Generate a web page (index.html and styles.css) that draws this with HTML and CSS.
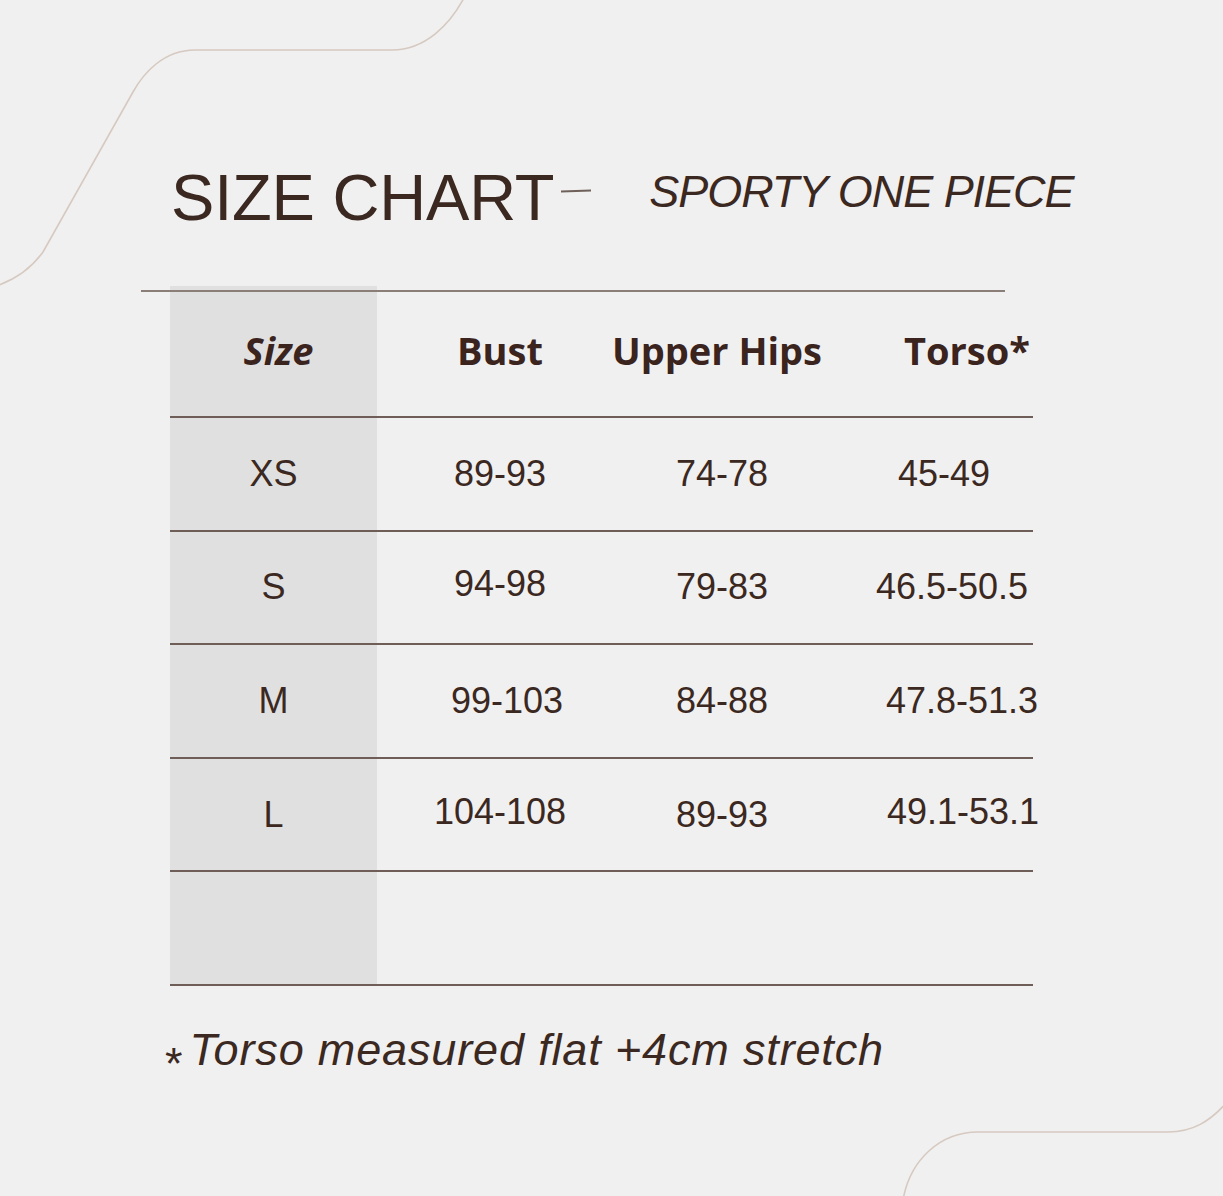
FILE: index.html
```html
<!DOCTYPE html>
<html lang="en">
<head>
<meta charset="utf-8">
<title>Size Chart – Sporty One Piece</title>
<link rel="stylesheet" href="styles.css">
</head>
<body>
<svg class="deco" width="1223" height="1196" viewBox="0 0 1223 1196" aria-hidden="true">
  <path d="M -4 286 C 14 280 30 270 43 252 L 133 92 C 143 74 163 50 195 50 L 392 50 C 425 50 450 25 465 -4" />
  <path d="M 903 1200 C 910 1160 940 1132 978 1132 L 1168 1132 C 1192 1132 1210 1122 1228 1101" />
</svg>
<main class="page">
  <header class="head">
    <h1 class="title">SIZE CHART</h1>
    <span class="dash"></span>
    <h2 class="subtitle">SPORTY ONE PIECE</h2>
  </header>

  <div class="rule-top"></div>

  <section class="chart">
    <div class="row row-head">
      <div class="cell c1 th th-size">Size</div>
      <div class="cell c2 th">Bust</div>
      <div class="cell c3 th th-hips">Upper Hips</div>
      <div class="cell c4 th th-torso">Torso*</div>
    </div>
    <div class="row">
      <div class="cell c1">XS</div>
      <div class="cell c2">89-93</div>
      <div class="cell c3">74-78</div>
      <div class="cell c4 t-xs">45-49</div>
    </div>
    <div class="row">
      <div class="cell c1">S</div>
      <div class="cell c2 up">94-98</div>
      <div class="cell c3">79-83</div>
      <div class="cell c4 t-s">46.5-50.5</div>
    </div>
    <div class="row">
      <div class="cell c1">M</div>
      <div class="cell c2 b-m">99-103</div>
      <div class="cell c3">84-88</div>
      <div class="cell c4 t-m">47.8-51.3</div>
    </div>
    <div class="row">
      <div class="cell c1">L</div>
      <div class="cell c2 up">104-108</div>
      <div class="cell c3">89-93</div>
      <div class="cell c4 t-l up">49.1-53.1</div>
    </div>
    <div class="row">
      <div class="cell c1"></div>
      <div class="cell c2"></div>
      <div class="cell c3"></div>
      <div class="cell c4"></div>
    </div>
  </section>

  <p class="note"><span class="star">*</span>Torso measured flat +4cm stretch</p>
</main>
</body>
</html>
```

FILE: styles.css
```css
html, body {
  margin: 0;
  padding: 0;
}

body {
  background: #f0f0f0;
  color: #3b2821;
  font-family: "Liberation Sans", Arial, sans-serif;
  width: 1223px;
  height: 1196px;
  overflow: hidden;
  position: relative;
}

.deco {
  position: absolute;
  left: 0;
  top: 0;
  z-index: 0;
}

.deco path {
  fill: none;
  stroke: #d6c9c0;
  stroke-width: 1.6;
}

.page {
  position: relative;
  z-index: 1;
  padding-top: 165px;
}

/* ---------- heading ---------- */
.head {
  display: flex;
  align-items: flex-start;
  margin-left: 171px;
  height: 65px;
}

.title {
  margin: 0;
  font-weight: 400;
  font-size: 65px;
  line-height: 65px;
  letter-spacing: -0.2px;
  color: #3b2821;
}

.dash {
  display: block;
  width: 30px;
  height: 1.5px;
  background: #6f605a;
  margin: 25px 0 0 7px;
  transform: rotate(-1.5deg);
}

.subtitle {
  margin: 4px 0 0 58px;
  font-weight: 400;
  font-style: italic;
  font-size: 45px;
  line-height: 45px;
  letter-spacing: -1.05px;
  color: #3b2821;
}

/* ---------- table ---------- */
.rule-top {
  position: relative;
  z-index: 2;
  margin: 60px 0 0 141px;
  width: 864px;
  height: 2px;
  background: #8b7e78;
}

.chart {
  margin: -6px 0 0 170px;
  width: 863px;
}

.row {
  display: grid;
  grid-template-columns: 207px 246px 198px 212px;
  box-sizing: border-box;
  height: 113.6px;
  border-bottom: 2px solid #6e5e57;
}

.row-head {
  height: 132px;
}

.cell {
  display: flex;
  align-items: center;
  justify-content: center;
  white-space: nowrap;
  box-sizing: border-box;
  font-size: 36px;
  color: #3b2821;
}

.c1 {
  background: #e0e0e0;
}

.th {
  font-family: "Open Sans", "Liberation Sans", sans-serif;
  font-weight: 700;
  font-size: 38px;
  color: #3a241d;
  padding-bottom: 2px;
}

.th-size {
  font-style: italic;
  padding-left: 10px;
}

.th-hips {
  padding-right: 10px;
}

.th-torso {
  padding-left: 80px;
}

.b-m {
  padding-left: 14px;
}

.up {
  padding-bottom: 6px;
}

.t-xs {
  padding-left: 34px;
}

.t-s {
  padding-left: 50px;
}

.t-m {
  padding-left: 70px;
}

.t-l {
  padding-left: 72px;
}

/* ---------- footnote ---------- */
.note {
  margin: 41px 0 0 165px;
  font-style: italic;
  font-size: 45px;
  line-height: 45px;
  letter-spacing: 0.85px;
  color: #3b2821;
}

.star {
  display: inline-block;
  font-style: normal;
  vertical-align: -14px;
  margin-right: 6px;
}
```
